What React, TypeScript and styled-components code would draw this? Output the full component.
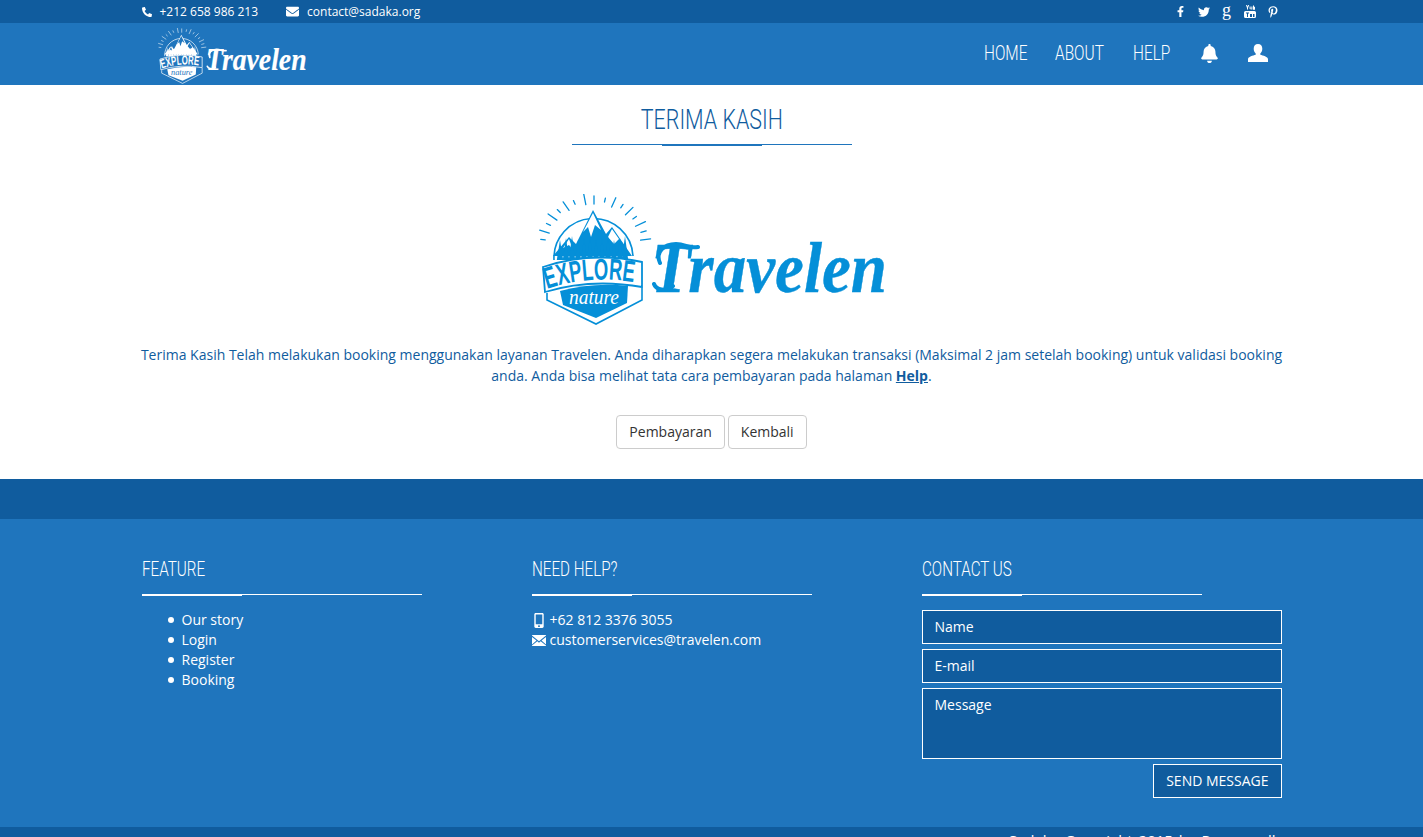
import React from "react";
import styled, { createGlobalStyle } from "styled-components";
import { FaPhoneAlt, FaEnvelope, FaFacebookF, FaTwitter, FaPinterestP, FaBell, FaMobileAlt } from "react-icons/fa";

const DARK = "#105c9e";
const BLUE = "#1f75bd";
const HEAD = `Roboto, "Liberation Sans", sans-serif`;

const Global = createGlobalStyle`
  html, body { margin: 0; padding: 0; overflow: hidden; height: 837px; }
  body { font-family: "Open Sans", sans-serif; font-size: 14px; line-height: 20px; background: #fff; color: #333; }
  * { box-sizing: border-box; }
`;

const Container = styled.div`
  width: 1140px;
  margin: 0 auto;
`;

const TopBar = styled.div`
  height: 23px;
  background: ${DARK};
  color: #fff;
  font-size: 12px;
`;
const TopInner = styled(Container)`
  display: flex;
  align-items: center;
  justify-content: space-between;
  height: 23px;
`;
const Contacts = styled.div`
  display: flex;
  align-items: center;
  gap: 28px;
`;
const ContactItem = styled.span`
  display: flex;
  align-items: center;
  gap: 8px;
  svg { display: block; }
`;
const Socials = styled.div`
  display: flex;
  align-items: center;
  gap: 11px;
  padding-right: 3px;
  svg { display: block; }
`;
const SocialSlot = styled.span`
  display: flex;
  justify-content: center;
  align-items: center;
  width: 12px;
  height: 14px;
`;
const GoogleGlyph = styled.span`
  font-family: "Liberation Serif", serif;
  font-size: 18px;
  line-height: 14px;
  position: relative;
  top: -2px;
`;

const NavBar = styled.div`
  height: 62px;
  background: ${BLUE};
`;
const NavInner = styled(Container)`
  display: flex;
  align-items: flex-start;
  justify-content: space-between;
  height: 62px;
  padding: 5px 14px 0 15px;
`;
const NavLinks = styled.nav`
  display: flex;
  align-items: center;
  gap: 30px;
  height: 50px;
  color: #fff;
`;
const NavLink = styled.a<{ $w: number }>`
  display: block;
  width: ${(p) => p.$w}px;
  font-family: ${HEAD};
  font-weight: 300;
  font-size: 20px;
  line-height: 50px;
  color: #fff;
  white-space: nowrap;
  transform: scaleX(0.77);
  transform-origin: left center;
`;
const NavIcon = styled.span<{ $w: number }>`
  display: flex;
  justify-content: center;
  width: ${(p) => p.$w}px;
  svg { display: block; }
`;

const LogoSvg = styled.svg<{ $w: number }>`
  display: block;
  width: ${(p) => p.$w}px;
  height: auto;
`;

const Main = styled.main`
  background: #fff;
  height: 394px;
  padding-top: 18px;
  text-align: center;
`;
const Title = styled.h1`
  position: relative;
  width: 280px;
  margin: 0 auto;
  height: 42px;
  font-family: ${HEAD};
  font-weight: 300;
  font-size: 28px;
  line-height: 34px;
  color: ${DARK};
  border-bottom: 1px solid ${BLUE};
  white-space: nowrap;
  &::after {
    content: "";
    position: absolute;
    left: 90px;
    bottom: -2px;
    width: 100px;
    height: 2px;
    background: ${BLUE};
  }
`;
const TitleText = styled.span`
  display: inline-block;
  transform: scaleX(0.765);
  transform-origin: center;
`;
const LogoRow = styled.div`
  display: flex;
  justify-content: center;
  padding-top: 49px;
`;
const Para = styled.p`
  margin: 18px -15px 0;
  font-size: 14px;
  line-height: 21px;
  color: ${DARK};
  a { color: ${DARK}; font-weight: 700; text-decoration: underline; }
`;
const Actions = styled.div`
  display: flex;
  justify-content: center;
  gap: 3px;
  margin-top: 29px;
`;
const Btn = styled.button`
  height: 34px;
  padding: 0 12px 1px;
  background: #fff;
  border: 1px solid #ccc;
  border-radius: 4px;
  color: #333;
  font: 14px/20px "Open Sans", sans-serif;
`;

const Band = styled.div`
  height: 40px;
  background: ${DARK};
`;

const Footer = styled.footer`
  height: 308px;
  background: ${BLUE};
  color: #fff;
  padding-top: 38px;
`;
const Columns = styled(Container)`
  display: grid;
  grid-template-columns: 390px 390px 360px;
`;
const FootHead = styled.h3`
  position: relative;
  width: 280px;
  height: 38px;
  margin: 0 0 15px;
  font-family: ${HEAD};
  font-weight: 300;
  font-size: 20px;
  line-height: 24px;
  color: #fff;
  white-space: nowrap;
  border-bottom: 1px solid #fff;
  &::after {
    content: "";
    position: absolute;
    left: 0;
    bottom: -2px;
    width: 100px;
    height: 2px;
    background: #fff;
  }
`;
const FootHeadText = styled.span`
  display: inline-block;
  transform: scaleX(0.76);
  transform-origin: left center;
`;
const List = styled.ul`
  margin: 0;
  padding: 0 0 0 40px;
  list-style: none;
`;
const ListItem = styled.li`
  position: relative;
  line-height: 20px;
  &::before {
    content: "";
    position: absolute;
    left: -14px;
    top: 7px;
    width: 6px;
    height: 6px;
    border-radius: 50%;
    background: #fff;
  }
`;
const InfoLine = styled.div`
  display: flex;
  align-items: center;
  gap: 4px;
  line-height: 20px;
  svg { display: block; }
`;
const InfoIcon = styled.span`
  display: flex;
  justify-content: center;
  width: 14px;
`;
const Form = styled.form`
  display: flex;
  flex-direction: column;
  gap: 5px;
  width: 360px;
`;
const Field = styled.input`
  display: block;
  width: 100%;
  height: 34px;
  padding: 0 12px 2px;
  border: 1px solid #fff;
  background: ${DARK};
  color: #fff;
  font: 14px/20px "Open Sans", sans-serif;
  outline: none;
  &::placeholder { color: #fff; opacity: 1; }
`;
const Area = styled.textarea`
  display: block;
  width: 100%;
  height: 71px;
  padding: 6px 12px;
  border: 1px solid #fff;
  background: ${DARK};
  color: #fff;
  font: 14px/20px "Open Sans", sans-serif;
  resize: none;
  outline: none;
  &::placeholder { color: #fff; opacity: 1; }
`;
const Send = styled.button`
  align-self: flex-end;
  height: 34px;
  padding: 0 12px;
  border: 1px solid #fff;
  background: ${DARK};
  color: #fff;
  font: 14px/20px "Open Sans", sans-serif;
`;

const Bottom = styled.div`
  height: 40px;
  background: ${DARK};
  color: #fff;
  font-size: 15px;
  line-height: 20px;
  padding-top: 3px;
`;
const BottomInner = styled(Container)`
  text-align: right;
  padding-right: 6px;
  word-spacing: 2px;
`;

const rays = [
  [-172, 44, 48], [-162, 42, 51], [-152, 44, 48], [-142, 42, 52], [-132, 45, 49], [-122, 42, 52], [-112, 45, 49],
  [-100, 42, 53], [-90, 42, 50], [-78, 45, 49], [-68, 42, 52], [-58, 45, 49], [-48, 42, 52], [-38, 44, 48],
  [-28, 42, 52], [-18, 44, 49], [-8, 42, 51],
];
const trees = [24, 30, 36, 42, 48, 54, 60, 66, 72, 78, 84, 89];

function Logo({ width, ink, paper }: { width: number; ink: string; paper: string }) {
  return (
    <LogoSvg $w={width} viewBox="0 0 352 132" role="img" aria-label="Travelen">
      <g stroke={ink} strokeWidth="1.3" strokeLinecap="round">
        {rays.map(([a, r1, r2]) => {
          const t = (a * Math.PI) / 180;
          return (
            <line
              key={a}
              x1={58 + 1.12 * r1 * Math.cos(t)}
              y1={52 + r1 * Math.sin(t)}
              x2={58 + 1.12 * r2 * Math.cos(t)}
              y2={52 + r2 * Math.sin(t)}
            />
          );
        })}
      </g>
      <path d="M18 66 A38 38 0 0 1 97 62" fill="none" stroke={ink} strokeWidth="1.6" />
      <path d="M17 62 L33 43 L40 50 L57 16 L70 40 L76 33 L96 62 Z" fill={ink} />
      <path d="M57 19 L47 38 L52 33 L55 43 L59 31 L65 36 Z M33 45 L27 54 L33 51 L37 56 Z M76 35 L72 43 L78 50 L83 45 Z" fill={paper} />
      {trees.map((x, i) => (
        <path key={x} d={`M${x} ${46 - (i % 3) * 2} L${x - 3.2} 66 L${x + 3.2} 66 Z`} fill={ink} />
      ))}
      <path d="M7 73 Q55 57 106 68 L106 93 Q55 84 9 98 Z" fill={paper} stroke={ink} strokeWidth="1.8" />
      <path id={`arc${width}`} d="M11 95 Q55 80 103 89" fill="none" />
      <text fill={ink} fontFamily="'Liberation Sans', sans-serif" fontWeight="700" fontSize="30" textLength="88" lengthAdjust="spacingAndGlyphs">
        <textPath href={`#arc${width}`}>EXPLORE</textPath>
      </text>
      <path d="M11 99 L11 106 L60 130 L106 106 L106 94" fill="none" stroke={ink} strokeWidth="1.6" />
      <path d="M24 97 Q58 88 92 92 L91 109 L60 124 L27 111 Z" fill={ink} />
      <text x="58" y="110" textAnchor="middle" fill={paper} fontFamily="'Liberation Serif', serif" fontStyle="italic" fontSize="20" textLength="50" lengthAdjust="spacingAndGlyphs">
        nature
      </text>
      <text
        x="115"
        y="98"
        fill={ink}
        stroke={ink}
        strokeWidth="0.4"
        fontFamily="'Liberation Serif', serif"
        fontStyle="italic"
        fontWeight="700"
        fontSize="72"
        textLength="236"
        lengthAdjust="spacingAndGlyphs"
      >
        Travelen
      </text>
      <path d="M124 69 C119 58 128 50 140 50 C150 50 152 55 162 53 M137 92 C130 98 120 96 118 90" fill="none" stroke={ink} strokeWidth="4" strokeLinecap="round" />
    </LogoSvg>
  );
}

const YoutubeIcon = () => (
  <svg width="12" height="13" viewBox="0 0 12 13" fill="#fff">
    <path d="M2 0h1l.6 1.600L4.200 0h1L4 3v1.600H3V3zM5.600 1.600h1v2.200h.8V1.600h1v3H7.400v-.3h-.8l-1-.3zM9 .5h1v1.200h1v3H9z" />
    <path fillRule="evenodd" d="M1.500 6h9A1.500 1.500 0 0 1 12 7.500v4A1.500 1.500 0 0 1 10.500 13h-9A1.500 1.500 0 0 1 0 11.500v-4A1.500 1.500 0 0 1 1.500 6zM2 7.500v1h1V12h1V8.500h1v-1zM6 9v3h2V9zM9 9v3h1.500V9z" />
  </svg>
);

const UserIcon = () => (
  <svg width="20" height="18" viewBox="0 0 20 18" fill="#fff">
    <path d="M10 0c2.800 0 4.300 2 4.300 4.800 0 2-.8 3.700-2 4.700v1.300c2.500.8 7.700 2 7.700 4.400V18H0v-2.800c0-2.400 5.200-3.600 7.700-4.400V9.500c-1.200-1-2-2.700-2-4.700C5.700 2 7.200 0 10 0z" />
  </svg>
);

const MailGlyph = () => (
  <svg width="14" height="11" viewBox="0 0 14 11" fill="#fff">
    <path d="M0 .6 7 6.300 14 .6V0H0zM0 2v7.400L4.500 5.600zM14 2 9.500 5.600 14 9.400zM5.300 6.300 0 10.600V11h14v-.4L8.700 6.300 7 7.700z" />
  </svg>
);

export default function App() {
  return (
    <>
      <Global />
      <TopBar>
        <TopInner>
          <Contacts>
            <ContactItem><FaPhoneAlt size={10} />+212 658 986 213</ContactItem>
            <ContactItem><FaEnvelope size={13} />contact@sadaka.org</ContactItem>
          </Contacts>
          <Socials>
            <SocialSlot><FaFacebookF size={11} /></SocialSlot>
            <SocialSlot><FaTwitter size={12} /></SocialSlot>
            <SocialSlot><GoogleGlyph>g</GoogleGlyph></SocialSlot>
            <SocialSlot><YoutubeIcon /></SocialSlot>
            <SocialSlot><FaPinterestP size={12} /></SocialSlot>
          </Socials>
        </TopInner>
      </TopBar>
      <NavBar>
        <NavInner>
          <Logo width={150} ink="#fff" paper={BLUE} />
          <NavLinks>
            <NavLink $w={41}>HOME</NavLink>
            <NavLink $w={48}>ABOUT</NavLink>
            <NavLink $w={38}>HELP</NavLink>
            <NavIcon $w={17}><FaBell size={19} /></NavIcon>
            <NavIcon $w={20}><UserIcon /></NavIcon>
          </NavLinks>
        </NavInner>
      </NavBar>
      <Main>
        <Title><TitleText>TERIMA KASIH</TitleText></Title>
        <LogoRow>
          <Logo width={352} ink="#058fd8" paper="#fff" />
        </LogoRow>
        <Container>
          <Para>
            Terima Kasih Telah melakukan booking menggunakan layanan Travelen. Anda diharapkan segera melakukan transaksi (Maksimal 2 jam setelah booking) untuk validasi booking anda. Anda bisa melihat tata cara pembayaran pada halaman <a>Help</a>.
          </Para>
        </Container>
        <Actions>
          <Btn>Pembayaran</Btn>
          <Btn>Kembali</Btn>
        </Actions>
      </Main>
      <Band />
      <Footer>
        <Columns>
          <div>
            <FootHead><FootHeadText>FEATURE</FootHeadText></FootHead>
            <List>
              <ListItem>Our story</ListItem>
              <ListItem>Login</ListItem>
              <ListItem>Register</ListItem>
              <ListItem>Booking</ListItem>
            </List>
          </div>
          <div>
            <FootHead><FootHeadText>NEED HELP?</FootHeadText></FootHead>
            <InfoLine><InfoIcon><FaMobileAlt size={15} /></InfoIcon>+62 812 3376 3055</InfoLine>
            <InfoLine><InfoIcon><MailGlyph /></InfoIcon>customerservices@travelen.com</InfoLine>
          </div>
          <div>
            <FootHead><FootHeadText>CONTACT US</FootHeadText></FootHead>
            <Form>
              <Field placeholder="Name" />
              <Field placeholder="E-mail" />
              <Area placeholder="Message" />
              <Send type="button">SEND MESSAGE</Send>
            </Form>
          </div>
        </Columns>
      </Footer>
      <Bottom>
        <BottomInner>Sadaka Copyright 2015 by Pongo.. all</BottomInner>
      </Bottom>
    </>
  );
}
